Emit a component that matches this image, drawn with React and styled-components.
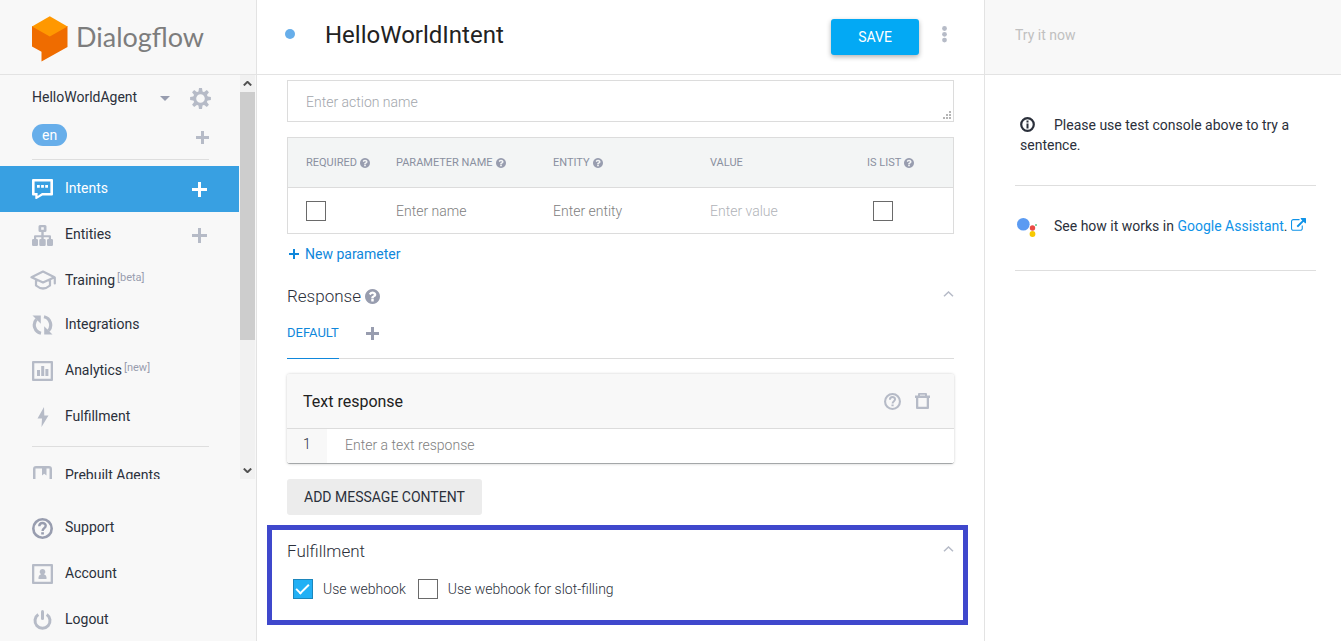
import React from "react";
import styled, { createGlobalStyle, css } from "styled-components";

const GlobalStyle = createGlobalStyle`
  *, *::before, *::after { box-sizing: border-box; }
  html, body { margin: 0; }
  body, button, input, textarea {
    font-family: Roboto, "Liberation Sans", sans-serif;
    font-size: 14px;
    color: #2b303b;
  }
  button { border: 0; padding: 0; background: none; cursor: pointer; }
  svg { display: block; flex: none; }
`;

const Page = styled.div`
  display: grid;
  grid-template-columns: 257px minmax(0, 1fr) 356px;
  height: 100vh;
  overflow: hidden;
  background: #fff;
`;

/* ---------- sidebar ---------- */

const Sidebar = styled.aside`
  display: grid;
  grid-template-rows: 75px minmax(0, 1fr) 162px;
  min-height: 0;
  background: #f8f8f8;
  border-right: 1px solid #e3e3e3;
`;

const Brand = styled.a`
  display: flex;
  align-items: center;
  gap: 8px;
  padding: 3px 0 0 32px;
  border-bottom: 1px solid #e3e3e3;
  color: #7d7d7d;
  text-decoration: none;
`;

const BrandName = styled.span`
  padding-bottom: 4px;
  font-family: Lato, Roboto, sans-serif;
  font-size: 27px;
  line-height: 36px;
`;

const SidebarScroll = styled.div`
  display: flex;
  min-height: 0;
  overflow: hidden;
`;

const NavColumn = styled.div`
  flex: 1;
  min-width: 0;
  margin-right: 1px;
`;

const AgentRow = styled.div`
  display: flex;
  align-items: center;
  height: 46px;
  padding: 0 28px 0 32px;
`;

const AgentButton = styled.button`
  display: flex;
  flex: 1;
  align-items: center;
  justify-content: space-between;
  margin-right: 20px;
`;

const AgentName = styled.span`
  line-height: 20px;
  padding-bottom: 2px;
`;

const LanguageRow = styled.div`
  display: flex;
  align-items: flex-start;
  justify-content: space-between;
  height: 38px;
  padding: 3px 30px 0 32px;
`;

const LanguageBadge = styled.button`
  height: 22px;
  padding: 0 10px;
  border-radius: 11px;
  background: #67aeea;
  color: #fff;
`;

const IconButton = styled.button`
  display: inline-flex;
  align-items: center;
  justify-content: center;
  color: ${(p) => p.$color || "#b6bbc7"};
`;

const AddLanguage = styled(IconButton)`
  height: 26px;
`;

const Divider = styled.hr`
  height: 1px;
  margin: ${(p) => (p.$flush ? "0 30px 6px 32px" : "6px 30px 6px 32px")};
  border: 0;
  background: #dedede;
`;

const NavRow = styled.div`
  display: flex;
  align-items: center;
  height: ${(p) => (p.$compact ? 44 : 46)}px;
  padding: 0 32px;
  ${(p) =>
    p.$active &&
    css`
      background: #38a0e2;
    `}
`;

const NavLink = styled.a`
  display: flex;
  flex: 1;
  align-items: center;
  gap: 12px;
  color: ${(p) => (p.$active ? "#fff" : "#2b303b")};
  text-decoration: none;
`;

const NavIcon = styled.span`
  display: flex;
  justify-content: center;
  width: 21px;
  color: ${(p) => (p.$active ? "#fff" : p.$dark ? "#989daf" : "#b6bbc7")};
`;

const NavLabel = styled.span`
  line-height: 20px;
  padding-bottom: ${(p) => (p.$compact ? 0 : 2)}px;
  white-space: nowrap;
`;

const NavTag = styled.sup`
  margin-left: 2px;
  font-size: 11px;
  line-height: 0;
  vertical-align: 4px;
  color: #989daf;
`;

const ScrollTrack = styled.div`
  display: flex;
  flex-direction: column;
  width: 15px;
  margin-right: 1px;
  background: #f1f1f1;
`;

const ScrollArrow = styled.button`
  display: flex;
  align-items: center;
  justify-content: center;
  height: 17px;
  color: #505050;
`;

const ScrollThumb = styled.div`
  flex: 67;
  background: #cdcdcd;
`;

const ScrollRest = styled.div`
  flex: 33;
`;

const SidebarFooter = styled.nav`
  padding-top: 26px;
`;

/* ---------- main column ---------- */

const Main = styled.main`
  display: flex;
  flex-direction: column;
  min-width: 0;
  min-height: 0;
  border-right: 1px solid #e3e3e3;
`;

const Header = styled.header`
  display: flex;
  align-items: center;
  flex: none;
  height: 75px;
  padding: 0 37px 0 28px;
  border-bottom: 1px solid #e3e3e3;
`;

const StatusDot = styled.span`
  width: 10px;
  height: 10px;
  margin-bottom: 6px;
  border-radius: 50%;
  background: #67aeea;
`;

const Title = styled.h1`
  flex: 1;
  margin: 0 0 4px 30px;
  font-size: 24px;
  font-weight: 400;
  line-height: 32px;
  color: #222;
`;

const SaveButton = styled.button`
  width: 88px;
  height: 36px;
  margin-right: 23px;
  border-radius: 3px;
  background: #03a9f4;
  color: #fff;
  box-shadow: 0 2px 5px rgba(0, 0, 0, 0.3);
`;

const MoreButton = styled(IconButton)`
  padding-bottom: 6px;
`;

const Content = styled.div`
  flex: 1;
  min-height: 0;
  overflow: hidden;
  padding: 5px 30px 16px;
`;

const ActionField = styled.label`
  display: flex;
  align-items: flex-end;
  padding: 0 2px 2px 18px;
  border: 1px solid #dcdcdc;
`;

const ActionInput = styled.textarea`
  flex: 1;
  height: 38px;
  padding: 11px 0 7px;
  border: 0;
  outline: 0;
  resize: none;
  overflow: hidden;
  background: transparent;
  font-weight: 300;
  line-height: 20px;
  &::placeholder { color: #a2a6ac; }
`;

const ParamTable = styled.table`
  width: 100%;
  margin-top: 15px;
  border: 1px solid #dcdcdc;
  border-spacing: 0;
  table-layout: fixed;
`;

const Th = styled.th`
  width: ${(p) => p.$width || "auto"};
  height: 50px;
  padding: 0 0 0 18px;
  background: #f3f5f5;
  border-bottom: 1px solid #dcdcdc;
  font-size: 11px;
  font-weight: 400;
  text-align: left;
  white-space: nowrap;
`;

const ThContent = styled.span`
  display: flex;
  align-items: center;
  gap: 3px;
  color: #989daf;
`;

const ThText = styled.span`
  color: #8a90a0;
`;

const Td = styled.td`
  height: 45px;
  padding: 0 0 0 ${(p) => (p.$inset ? 24 : 18)}px;
`;

const CellInput = styled.input`
  display: block;
  width: 100%;
  padding: 0;
  border: 0;
  outline: 0;
  font-weight: 300;
  line-height: 20px;
  &::placeholder { color: ${(p) => (p.$faint ? "#b0b3b8" : "#808080")}; }
`;

const Checkbox = styled.input.attrs({ type: "checkbox" })`
  appearance: none;
  display: grid;
  flex: none;
  width: 20px;
  height: 20px;
  margin: 0;
  border: 1px solid #6a6a6a;
  background: #fff;
  &:checked {
    padding: 4px 2px;
    border-color: #1c86bc;
    background: #22b0f5;
  }
  &:checked::after {
    content: "";
    width: 13px;
    height: 7px;
    border: solid #fff;
    border-width: 0 0 2px 2px;
    transform: rotate(-45deg);
  }
`;

const NewParameter = styled.button`
  display: flex;
  align-items: center;
  gap: 6px;
  height: 20px;
  margin: 10px 0 12px 2px;
  color: #0f87db;
`;

const SectionHead = styled.div`
  display: flex;
  align-items: center;
  justify-content: space-between;
  height: ${(p) => (p.$tall ? 42 : 40)}px;
`;

const SectionTitle = styled.h2`
  display: flex;
  align-items: center;
  gap: 4px;
  margin: 0;
  font-size: 17px;
  font-weight: 300;
  line-height: 20px;
  color: #2b303b;
`;

const Collapse = styled(IconButton)`
  padding-bottom: 5px;
`;

const HelpMark = styled.span`
  color: #989daf;
`;

const Tabs = styled.div`
  display: flex;
  gap: 27px;
  height: 43px;
  border-bottom: 1px solid #dcdcdc;
`;

const Tab = styled.button`
  height: 43px;
  padding-bottom: 8px;
  border-bottom: 1px solid #0f87db;
  font-size: 13px;
  line-height: 34px;
  color: #0f87db;
`;

const AddTab = styled(IconButton)`
  height: 34px;
`;

const Card = styled.section`
  margin-top: 15px;
  border-bottom: 1px solid #a4a7a9;
  border-radius: 3px;
  overflow: hidden;
  box-shadow: 0 0 3px rgba(0, 0, 0, 0.2);
`;

const CardHead = styled.div`
  display: flex;
  align-items: center;
  height: 55px;
  padding: 0 24px 0 16px;
  background: #f8f8f8;
  border-bottom: 1px solid #dcdcdc;
`;

const CardTitle = styled.h3`
  flex: 1;
  margin: 0;
  padding-top: 1px;
  font-size: 16px;
  font-weight: 400;
  line-height: 20px;
  color: #222;
`;

const CardActions = styled.div`
  display: flex;
  align-items: center;
  gap: 14px;
`;

const ResponseRow = styled.label`
  display: flex;
  height: 34px;
`;

const RowNumber = styled.span`
  width: 40px;
  padding: 0 16px;
  background: #f8f8f8;
  font-weight: 300;
  line-height: 31px;
`;

const ResponseInput = styled(CellInput)`
  flex: 1;
  padding: 0 18px 2px;
`;

const AddContent = styled.button`
  height: 36px;
  margin: 15px 0 10px;
  padding: 0 17px;
  border-radius: 3px;
  background: #ececec;
`;

const FulfillmentBox = styled.section`
  margin: 0 -14px 0 -20px;
  padding: 0 9px 21px 15px;
  border: 5px solid #3f48cc;
`;

const CheckRow = styled.div`
  display: flex;
  gap: 12px;
  margin: 7px 0 0 6px;
`;

const CheckLabel = styled.label`
  display: flex;
  align-items: center;
  gap: 10px;
  height: 20px;
  font-weight: 300;
`;

/* ---------- test console ---------- */

const Console = styled.aside`
  min-width: 0;
`;

const ConsoleHeader = styled.div`
  display: flex;
  align-items: center;
  height: 75px;
  padding: 0 30px 4px;
  background: #f8f8f8;
  border-bottom: 1px solid #e3e3e3;
`;

const ConsoleInput = styled.input`
  width: 100%;
  padding: 0;
  border: 0;
  outline: 0;
  background: transparent;
  &::placeholder { color: #c0c0c0; }
`;

const ConsoleBody = styled.div`
  padding: 10px 25px 0 30px;
`;

const ConsoleNote = styled.p`
  margin: 0;
  padding: ${(p) => (p.$first ? "30px 5px" : "30px 0 34px 2px")};
  border-bottom: 1px solid #dedede;
  line-height: 20px;
`;

const NoteIcon = styled.span`
  display: inline-block;
  vertical-align: top;
  margin-right: ${(p) => (p.$wide ? 19 : 17)}px;
  padding-top: 2px;
  height: 20px;
`;

const NoteLink = styled.a`
  color: #0f93e8;
  text-decoration: none;
`;

const LinkIcon = styled.span`
  display: inline-block;
  vertical-align: top;
  padding-top: 2px;
`;

/* ---------- icons ---------- */

const Svg = ({ w, h = w, box, children, ...rest }) => (
  <svg width={w} height={h} viewBox={box || `0 0 ${w} ${h}`} fill="currentColor" aria-hidden="true" {...rest}>
    {children}
  </svg>
);

const Logo = () => (
  <Svg w={36} h={46}>
    <path fill="#ef6c00" d="M0 10 18 14 35.500 10V31L9.500 45.500V35.800L0 30.500Z" />
    <path fill="#ff9800" d="M17.800 0.200 35.500 10.500 17.800 20.500 0 10.500Z" />
  </Svg>
);

const Plus = ({ size = 14, thick = 3 }) => (
  <Svg w={size}>
    <path d={`M${(size - thick) / 2} 0h${thick}v${size}h-${thick}zM0 ${(size - thick) / 2}h${size}v${thick}h-${size}z`} />
  </Svg>
);

const Gear = () => (
  <Svg w={21} box="-10.500 -10.500 21 21">
    <circle r="5.800" fill="none" stroke="currentColor" strokeWidth="3" />
    {[0, 45, 90, 135, 180, 225, 270, 315].map((a) => (
      <path key={a} transform={`rotate(${a})`} d="M-2.200 -6 -1.500 -10.400H1.500L2.200 -6Z" />
    ))}
  </Svg>
);

const Caret = () => (
  <Svg w={10} h={5}>
    <path d="M0 0h10L5 5z" fill="#989daf" />
  </Svg>
);

const IntentsIcon = () => (
  <Svg w={21} h={20}>
    <path fillRule="evenodd" d="M1 0H20Q21 0 21 1V15.500Q21 16.500 20 16.500H10.500L4.500 20Q3.500 20.300 3.300 19.300V16.500H1Q0 16.500 0 15.500V1Q0 0 1 0ZM2.600 2.600V13.900H5.600V17L10 13.900H18.400V2.600Z" />
    <path d="M5 6h2.800v2.800H5zM9.100 6h2.800v2.800H9.100zM13.200 6H16v2.800h-2.800z" />
  </Svg>
);

const EntitiesIcon = () => (
  <Svg w={21} h={21}>
    <path fillRule="evenodd" d="M8 0h5q1.500 0 1.500 1.500v4q0 1.500-1.500 1.500h-1.300v3.200H18q1 0 1 1V14h.8q1.200 0 1.200 1.200v4.600q0 1.200-1.200 1.200h-3.600q-1.200 0-1.200-1.200v-4.600q0-1.200 1.200-1.200h.6v-1.800h-5.100V14h.8q1.200 0 1.200 1.200v4.600q0 1.200-1.200 1.200H8.500q-1.200 0-1.200-1.200v-4.600Q7.300 14 8.500 14h.8v-1.800H4.200V14h.6Q6 14 6 15.200v4.600Q6 21 4.800 21H1.200Q0 21 0 19.800v-4.600Q0 14 1.200 14H2v-2.800q0-1 1-1h6.300V7H8Q6.500 7 6.500 5.500v-4Q6.500 0 8 0zM9.200 2.200v2.600h2.600V2.200z" />
  </Svg>
);

const TrainingIcon = () => (
  <Svg w={26} h={20} fill="none" stroke="currentColor" strokeWidth="2.200" strokeLinejoin="round" strokeLinecap="round">
    <path d="M1.500 7.300 13 1.500 24.500 7.300 13 12.500Z M6 10v5.500Q13 21.500 20 15.500V10M24.800 7.500V13.500" />
  </Svg>
);

const IntegrationsIcon = () => (
  <Svg w={21} h={20}>
    <path fill="none" stroke="currentColor" strokeWidth="3.200" d="M9 18.300A8.500 8.500 0 0 1 4.500 4.300M12 1.700A8.500 8.500 0 0 1 16.500 15.700" />
    <path d="M0.500 0.500H8.800V8.800ZM20.500 19.500H12.200V11.200Z" />
  </Svg>
);

const AnalyticsIcon = () => (
  <Svg w={21} h={20}>
    <path fillRule="evenodd" d="M1 0H20Q21 0 21 1V19Q21 20 20 20H1Q0 20 0 19V1Q0 0 1 0ZM2.300 2.300V17.700H18.700V2.300Z" />
    <path d="M5 9h3v6H5zM9.200 5h3v10h-3zM13.400 8h3v7h-3z" />
  </Svg>
);

const BoltIcon = () => (
  <Svg w={12} h={20}>
    <path d="M7 0 0.500 11.500H5L4.500 20 11.500 8.500H7.300Z" />
  </Svg>
);

const PrebuiltIcon = () => (
  <Svg w={19} h={20}>
    <path fillRule="evenodd" d="M3 0H16Q19 0 19 3V17Q19 20 16 20H3Q0 20 0 17V3Q0 0 3 0ZM2.500 2.500V17.500H16.500V2.500H13.500V9.500L11.200 7.700 9 9.500V2.500Z" />
  </Svg>
);

const AccountIcon = () => (
  <Svg w={21} h={20}>
    <path fillRule="evenodd" d="M1 0H20Q21 0 21 1V19Q21 20 20 20H1Q0 20 0 19V1Q0 0 1 0ZM2.300 2.300V17.700H18.700V2.300Z" />
    <path d="M10.500 5a2.800 2.800 0 0 1 1.500 5.200q2.500.8 2.500 3V15h-8v-1.800q0-2.200 2.500-3A2.800 2.800 0 0 1 10.500 5z" />
  </Svg>
);

const PowerIcon = () => (
  <Svg w={19} h={20} fill="none" stroke="currentColor" strokeWidth="3">
    <path d="M5.300 4.500A7.500 7.500 0 1 0 13.700 4.500" />
    <path d="M9.500 1.500V8.500" strokeLinecap="round" />
  </Svg>
);

const SupportIcon = ({ size = 21 }) => (
  <Svg w={size} box="0 0 21 21">
    <circle cx="10.500" cy="10.500" r="9.200" fill="none" stroke="currentColor" strokeWidth="2.600" />
    <path fill="none" stroke="currentColor" strokeWidth="2.400" d="M7.300 8.300C7.300 3.800 13.700 4.200 13.700 7.800 13.700 10.200 10.600 10.200 10.600 13" />
    <path d="M9.200 14.200h2.700v2.300H9.200z" />
  </Svg>
);

const InfoIcon = () => (
  <Svg w={17}>
    <circle cx="7.500" cy="7.500" r="6.300" fill="none" stroke="currentColor" strokeWidth="2.200" />
    <path d="M6.500 3.500h2v2h-2zM6.500 6.500h2v5h-2z" />
  </Svg>
);

const QuestionCircle = ({ size }) => (
  <Svg w={size} box="128 128 1536 1536">
    <path d="M1024 1376v-192q0-14-9-23t-23-9h-192q-14 0-23 9t-9 23v192q0 14 9 23t23 9h192q14 0 23-9t9-23zm256-672q0-88-55.500-163t-138.500-116-170-41q-243 0-371 213-15 24 8 42l132 100q7 6 19 6 16 0 25-12 53-68 86-92 34-24 86-24 48 0 85.500 26t37.500 59q0 38-20 61t-68 45q-63 28-115.500 86.500t-52.500 125.500v36q0 14 9 23t23 9h192q14 0 23-9t9-23q0-19 21.500-49.500t54.500-49.500q32-18 49-28.500t46-35 44.500-48 28-60.500 12.500-81zm384 192q0 209-103 385.500t-279.500 279.500-385.500 103-385.500-103-279.500-279.500-103-385.500 103-385.500 279.500-279.500 385.500-103 385.500 103 279.500 279.500 103 385.500z" />
  </Svg>
);

const ExternalLink = () => (
  <Svg w={15} h={15} box="0 0 1792 1792">
    <path d="M1408 928v320q0 119-84.500 203.500t-203.500 84.500h-832q-119 0-203.500-84.500t-84.500-203.500v-832q0-119 84.500-203.500t203.500-84.500h704q14 0 23 9t9 23v64q0 14-9 23t-23 9h-704q-66 0-113 47t-47 113v832q0 66 47 113t113 47h832q66 0 113-47t47-113v-320q0-14 9-23t23-9h64q14 0 23 9t9 23zm384-864v512q0 26-19 45t-45 19-45-19l-176-176-652 652q-10 10-23 10t-23-10l-114-114q-10-10-10-23t10-23l652-652-176-176q-19-19-19-45t19-45 45-19h512q26 0 45 19t19 45z" />
  </Svg>
);

const Chevron = ({ down, w = 11, h = 6, stroke = 1.5 }) => (
  <Svg w={w} h={h} box="0 0 11 6" fill="none" stroke="currentColor" strokeWidth={stroke}>
    <path d={down ? "M1 0.700 5.500 5 10 0.700" : "M1 5.300 5.500 1 10 5.300"} />
  </Svg>
);

const Kebab = () => (
  <Svg w={5} h={17}>
    <circle cx="2.500" cy="2.500" r="2.400" />
    <circle cx="2.500" cy="8.300" r="2.400" />
    <circle cx="2.500" cy="14.100" r="2.400" />
  </Svg>
);

const Grip = () => (
  <Svg w={8}>
    <path fill="#b5b5b5" d="M6 0h2v2H6zM3 3h2v2H3zM6 3h2v2H6zM0 6h2v2H0zM3 6h2v2H3zM6 6h2v2H6z" />
  </Svg>
);

const Trash = () => (
  <Svg w={15} h={16}>
    <path fillRule="evenodd" d="M3 2.500V1Q3 0 4 0h7q1 0 1 1v1.500H15v2.500h-1V15q0 1-1 1H2q-1 0-1-1V5H0V2.500zM5 1.700v.8h5v-.8zM3.300 5v8.700h8.400V5z" />
  </Svg>
);

const AssistantIcon = () => (
  <Svg w={20} h={19}>
    <circle cx="6.300" cy="6.300" r="6.300" fill="#5b9bf2" />
    <circle cx="15.500" cy="10" r="2.700" fill="#ea4c45" />
    <circle cx="15.500" cy="16" r="2.900" fill="#f7c900" />
    <circle cx="19" cy="7" r="1" fill="#5fca8c" />
  </Svg>
);

/* ---------- data ---------- */

const navItems = [
  { label: "Intents", icon: IntentsIcon, active: true, add: true },
  { label: "Entities", icon: EntitiesIcon, add: true },
  { label: "Training", tag: "[beta]", icon: TrainingIcon, compact: true },
  { label: "Integrations", icon: IntegrationsIcon },
  { label: "Analytics", tag: "[new]", icon: AnalyticsIcon },
  { label: "Fulfillment", icon: BoltIcon },
];

const footerItems = [
  { label: "Support", icon: SupportIcon, dark: true },
  { label: "Account", icon: AccountIcon },
  { label: "Logout", icon: PowerIcon },
];

const columns = [
  { label: "REQUIRED", help: true, width: "90px" },
  { label: "PARAMETER NAME", help: true },
  { label: "ENTITY", help: true },
  { label: "VALUE" },
  { label: "IS LIST", help: true, width: "104px" },
];

const NavItem = ({ item }) => {
  const Icon = item.icon;
  return (
    <NavRow $active={item.active} $compact={item.compact}>
      <NavLink href="#" $active={item.active}>
        <NavIcon $active={item.active} $dark={item.dark}>
          <Icon />
        </NavIcon>
        <NavLabel $compact={item.compact}>
          {item.label}
          {item.tag && <NavTag>{item.tag}</NavTag>}
        </NavLabel>
      </NavLink>
      {item.add && (
        <IconButton $color={item.active ? "#fff" : undefined} aria-label={`Add ${item.label}`}>
          <Plus size={15} thick={3} />
        </IconButton>
      )}
    </NavRow>
  );
};

export default function App() {
  return (
    <>
      <GlobalStyle />
      <Page>
        <Sidebar>
          <Brand href="#">
            <Logo />
            <BrandName>Dialogflow</BrandName>
          </Brand>
          <SidebarScroll>
            <NavColumn>
              <AgentRow>
                <AgentButton>
                  <AgentName>HelloWorldAgent</AgentName>
                  <Caret />
                </AgentButton>
                <IconButton aria-label="Agent settings">
                  <Gear />
                </IconButton>
              </AgentRow>
              <LanguageRow>
                <LanguageBadge>en</LanguageBadge>
                <AddLanguage aria-label="Add language">
                  <Plus size={13} />
                </AddLanguage>
              </LanguageRow>
              <Divider $flush />
              <nav>
                {navItems.map((item) => (
                  <NavItem key={item.label} item={item} />
                ))}
                <Divider />
                <NavItem item={{ label: "Prebuilt Agents", icon: PrebuiltIcon }} />
              </nav>
            </NavColumn>
            <ScrollTrack>
              <ScrollArrow aria-label="Scroll up">
                <Chevron w={9} h={5} stroke={2.5} />
              </ScrollArrow>
              <ScrollThumb />
              <ScrollRest />
              <ScrollArrow aria-label="Scroll down">
                <Chevron down w={9} h={5} stroke={2.5} />
              </ScrollArrow>
            </ScrollTrack>
          </SidebarScroll>
          <SidebarFooter>
            {footerItems.map((item) => (
              <NavItem key={item.label} item={item} />
            ))}
          </SidebarFooter>
        </Sidebar>

        <Main>
          <Header>
            <StatusDot />
            <Title>HelloWorldIntent</Title>
            <SaveButton>SAVE</SaveButton>
            <MoreButton aria-label="More options">
              <Kebab />
            </MoreButton>
          </Header>
          <Content>
            <ActionField>
              <ActionInput rows={1} placeholder="Enter action name" aria-label="Action name" />
              <Grip />
            </ActionField>

            <ParamTable>
              <thead>
                <tr>
                  {columns.map((c) => (
                    <Th key={c.label} $width={c.width} scope="col">
                      <ThContent>
                        <ThText>{c.label}</ThText>
                        {c.help && <QuestionCircle size={10} />}
                      </ThContent>
                    </Th>
                  ))}
                </tr>
              </thead>
              <tbody>
                <tr>
                  <Td><Checkbox aria-label="Required" /></Td>
                  <Td><CellInput placeholder="Enter name" aria-label="Parameter name" /></Td>
                  <Td><CellInput placeholder="Enter entity" aria-label="Entity" /></Td>
                  <Td><CellInput $faint placeholder="Enter value" aria-label="Value" /></Td>
                  <Td $inset><Checkbox aria-label="Is list" /></Td>
                </tr>
              </tbody>
            </ParamTable>

            <NewParameter>
              <Plus size={10} thick={2} />
              New parameter
            </NewParameter>

            <SectionHead>
              <SectionTitle>
                Response
                <HelpMark><QuestionCircle size={15} /></HelpMark>
              </SectionTitle>
              <Collapse aria-label="Collapse response"><Chevron /></Collapse>
            </SectionHead>
            <Tabs>
              <Tab>DEFAULT</Tab>
              <AddTab $color="#989daf" aria-label="Add response tab"><Plus size={13} /></AddTab>
            </Tabs>

            <Card>
              <CardHead>
                <CardTitle>Text response</CardTitle>
                <CardActions>
                  <IconButton aria-label="Help"><SupportIcon size={17} /></IconButton>
                  <IconButton aria-label="Delete"><Trash /></IconButton>
                </CardActions>
              </CardHead>
              <ResponseRow>
                <RowNumber>1</RowNumber>
                <ResponseInput placeholder="Enter a text response" />
              </ResponseRow>
            </Card>

            <AddContent>ADD MESSAGE CONTENT</AddContent>

            <FulfillmentBox>
              <SectionHead $tall>
                <SectionTitle>Fulfillment</SectionTitle>
                <Collapse aria-label="Collapse fulfillment"><Chevron /></Collapse>
              </SectionHead>
              <CheckRow>
                <CheckLabel><Checkbox defaultChecked />Use webhook</CheckLabel>
                <CheckLabel><Checkbox />Use webhook for slot-filling</CheckLabel>
              </CheckRow>
            </FulfillmentBox>
          </Content>
        </Main>

        <Console>
          <ConsoleHeader>
            <ConsoleInput placeholder="Try it now" aria-label="Try it now" />
          </ConsoleHeader>
          <ConsoleBody>
            <ConsoleNote $first>
              <NoteIcon><InfoIcon /></NoteIcon>
              Please use test console above to try a sentence.
            </ConsoleNote>
            <ConsoleNote>
              <NoteIcon><AssistantIcon /></NoteIcon>
              See how it works in <NoteLink href="#">Google Assistant</NoteLink>.{" "}
              <NoteLink href="#" aria-label="Open Google Assistant"><LinkIcon><ExternalLink /></LinkIcon></NoteLink>
            </ConsoleNote>
          </ConsoleBody>
        </Console>
      </Page>
    </>
  );
}
